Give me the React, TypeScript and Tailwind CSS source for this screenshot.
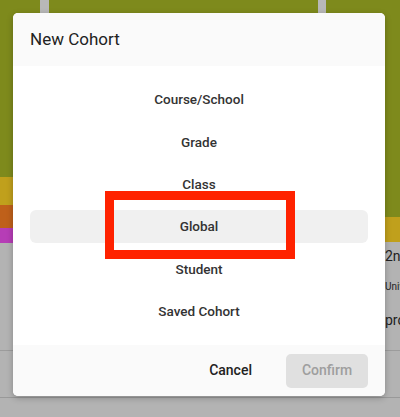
import React from 'react';

const options = ['Course/School', 'Grade', 'Class', 'Global', 'Student', 'Saved Cohort'];

function Backdrop() {
  return (
    <div className="flex h-[417px] w-[400px] flex-col overflow-hidden bg-[#b3b3b3]">
      <div className="flex h-[397px]">
        {/* Left column */}
        <div className="flex w-[40px] flex-col">
          <div className="h-[177px] bg-[#7e8a1c]" />
          <div className="h-[28px] bg-[#c0a01c]" />
          <div className="h-[23px] bg-[#bf601a]" />
          <div className="h-[15px] bg-[#b63db6]" />
          <div className="flex h-[107px] justify-end overflow-hidden pt-[5px] text-[14px] text-[#222]">
            <span className="whitespace-nowrap">Info</span>
          </div>
          <div className="h-px bg-[#9c9c9c]" />
        </div>
        <div className="flex w-[9px] flex-col">
          <div className="h-[200px] bg-[#b8b8b8]" />
        </div>
        {/* Middle column */}
        <div className="flex flex-1 flex-col">
          <div className="h-[200px] bg-[#7e8a1c]" />
        </div>
        <div className="flex w-[8px] flex-col">
          <div className="h-[200px] bg-[#b8b8b8]" />
        </div>
        {/* Right column */}
        <div className="flex w-[74px] flex-col">
          <div className="h-[217px] bg-[#7e8a1c]" />
          <div className="h-[25px] bg-[#c0a01c]" />
          <div className="flex h-[108px] flex-col overflow-hidden pl-[59px] text-[#222]">
            <span className="mt-[4px] whitespace-nowrap text-[14px]">2nd</span>
            <span className="mt-[12px] whitespace-nowrap text-[10px]">Unive</span>
            <span className="mt-[16px] whitespace-nowrap text-[14px]">pro</span>
          </div>
          <div className="h-px bg-[#9c9c9c]" />
        </div>
      </div>
      <div className="h-px bg-[#999]" />
    </div>
  );
}

export default function App() {
  return (
    <div className="relative h-[417px] w-[400px] overflow-hidden font-['Roboto',sans-serif]">
      <Backdrop />

      {/* Dialog */}
      <div className="absolute left-[13px] top-[13px] flex h-[383px] w-[372px] flex-col overflow-hidden rounded-[5px] bg-white shadow-[0_2px_6px_rgba(0,0,0,0.25)]">
        <div className="flex h-[53px] items-center bg-[#fafafa] px-[17px] text-[17px] text-[#222]">
          New Cohort
        </div>
        <div className="flex flex-1 flex-col gap-[9.3px] px-[17px] pt-[17px]">
          {options.map((opt) => (
            <div
              key={opt}
              className={`flex h-[33px] items-center justify-center rounded-[6px] text-[13.5px] font-medium text-[#333] ${
                opt === 'Global' ? 'bg-[#f0f0f0]' : ''
              }`}
            >
              {opt}
            </div>
          ))}
        </div>
        <div className="flex h-[51px] items-center justify-end gap-[18px] bg-[#fafafa] px-[17px]">
          <button className="h-[34px] px-[16px] text-[14px] font-medium text-[#222]">Cancel</button>
          <button className="h-[34px] w-[82px] rounded-[5px] bg-[#e0e0e0] text-[14px] font-medium text-[#9e9e9e]">
            Confirm
          </button>
        </div>
      </div>

      {/* Annotation box */}
      <div className="absolute left-[105px] top-[191px] h-[68px] w-[190px] border-[9px] border-[#ff2200]" />
    </div>
  );
}
